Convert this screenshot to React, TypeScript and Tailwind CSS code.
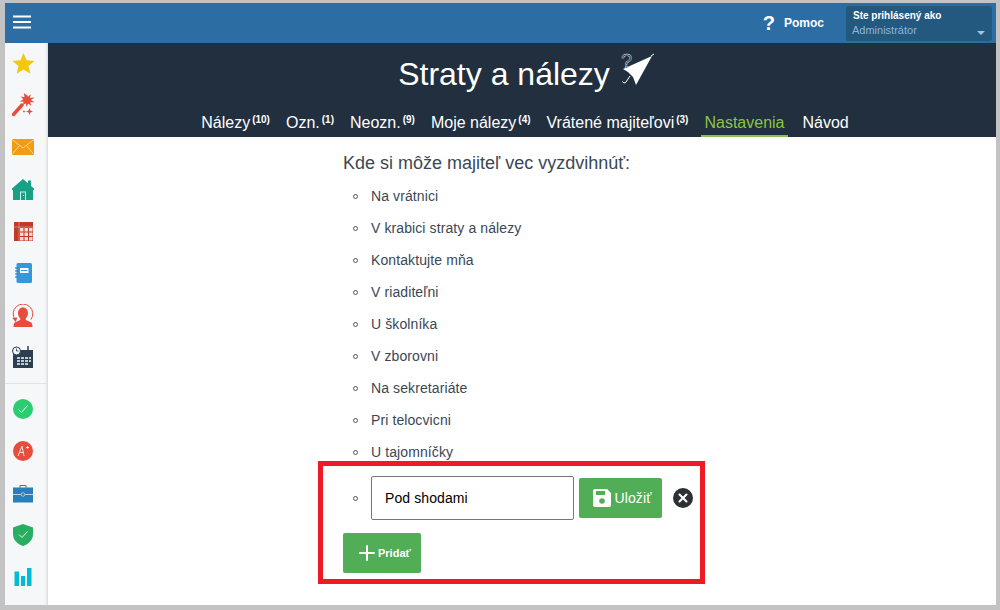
import React from 'react';
import { Plus, X } from 'lucide-react';

const places = [
  'Na vrátnici',
  'V krabici straty a nálezy',
  'Kontaktujte mňa',
  'V riaditeľni',
  'U školníka',
  'V zborovni',
  'Na sekretariáte',
  'Pri telocvicni',
  'U tajomníčky',
];

const tabs = [
  { label: 'Nálezy', count: '(10)' },
  { label: 'Ozn.', count: '(1)' },
  { label: 'Neozn.', count: '(9)' },
  { label: 'Moje nálezy', count: '(4)' },
  { label: 'Vrátené majiteľovi', count: '(3)' },
  { label: 'Nastavenia', active: true },
  { label: 'Návod', last: true },
];

const Bullet = () => (
  <span className="mr-[13px] ml-[10px] h-[5px] w-[5px] shrink-0 rounded-full border border-[#555]" />
);

const SideIcon = ({ children, className = 'h-[42px]' }: { children: React.ReactNode; className?: string }) => (
  <div className={`flex w-full items-center justify-center pr-[7px] ${className}`}>{children}</div>
);

const Sidebar = () => (
  <aside className="flex w-[43px] shrink-0 flex-col items-center bg-[#f5f7f9] shadow-[inset_-3px_0_3px_-2px_rgba(0,0,0,0.15)]">
    <SideIcon className="h-[41px]">
      <svg width="23" height="23" viewBox="0 0 24 24"><path fill="#f4c80f" d="M12 1l3.200 7.600 8.300.7-6.300 5.300 2 8.200L12 18.300 4.800 22.800l2-8.200L.5 9.300l8.300-.7z" /></svg>
    </SideIcon>
    <SideIcon>
      <svg width="24" height="24" viewBox="0 0 24 24">
        <path stroke="#e74c3c" strokeWidth="3.400" strokeLinecap="round" d="M2.500 21.500L11 12" />
        <path fill="#e74c3c" d="M15.500 0l1.300 3.800 3-2.500-1 3.700 4.700-.5-3.500 2.500 3.500 2.300-4.300-.1 1.200 3.800-3.300-2.500-1.300 3.700-1.100-3.900-3.400 2.200 1.500-3.700-4.100-.4 3.700-2.100-2.900-2.800 4 .7-.7-4.100 3.200 2.400z" />
        <path fill="#e74c3c" d="M18.500 15l.9 2.600 2.600.9-2.600.9-.9 2.600-.9-2.600-2.600-.9 2.600-.9zM13 17l.4 1.100 1.100.4-1.100.4-.4 1.100-.4-1.100-1.100-.4 1.100-.4z" />
      </svg>
    </SideIcon>
    <SideIcon>
      <svg width="22" height="16" viewBox="0 0 22 16">
        <rect width="22" height="16" fill="#f39c12" />
        <path fill="none" stroke="#fbe3b5" strokeWidth="0.800" d="M0 0.500l11 8.500L22 0.500M0 15.500l7.500-9M22 15.500l-7.500-9" />
      </svg>
    </SideIcon>
    <SideIcon>
      <svg width="22" height="21" viewBox="0 0 22 21">
        <path fill="#16a085" d="M11 0l5 4.300V1.500h3v5.400l3 2.600v1.500h-1V21H1V11H0V9.500z" />
        <path fill="#d6efe9" d="M8 12.500h6V21h-1V13.500H9V21H8z" />
        <rect x="11" y="16" width="1" height="1" fill="#d6efe9" />
      </svg>
    </SideIcon>
    <SideIcon>
      <svg width="19" height="19" viewBox="0 0 19 19">
        <rect width="19" height="19" fill="#c0392b" />
        <path fill="#f5dcd9" d="M6 6h3.500v3.500H6zM10.500 6H14v3.500h-3.500zM15 6h3.500v3.500H15zM6 10.500h3.500V14H6zM10.500 10.500H14V14h-3.500zM15 10.500h3.500V14H15zM6 15h3.500v3.500H6zM10.500 15H14v3.500h-3.500zM15 15h3.500v3.500H15z" />
        <path stroke="#e9a79f" strokeWidth="0.600" d="M0 5h19M5 0v19" />
      </svg>
    </SideIcon>
    <SideIcon>
      <svg width="17" height="20" viewBox="0 0 17 20">
        <rect x="1.500" width="15.500" height="20" rx="1.500" fill="#3498db" />
        <rect x="5" y="5" width="8.500" height="5" fill="#fff" />
        <rect x="6" y="7" width="6.500" height="1" fill="#3498db" />
        <path stroke="#2c6da4" strokeWidth="1" d="M0 5h3M0 8h3M0 11h3M0 14h3" />
      </svg>
    </SideIcon>
    <SideIcon>
      <svg width="22" height="23" viewBox="0 0 22 23">
        <path fill="none" stroke="#e74c3c" strokeWidth="1" d="M3 15.500A9.800 9.800 0 1 1 19 15.500" />
        <path fill="#e74c3c" d="M0.500 14l5-.5-2 4.500z" />
        <path fill="#e74c3c" d="M11 3.500c3.200 0 5 2.500 5 5.500 0 2.200-.8 4.200-2.200 5.300v1.700l5 2.300c1 .5 1.700 2 1.700 4.700h-19c0-2.700.7-4.200 1.700-4.700l5-2.300v-1.700C6.800 13.200 6 11.200 6 9c0-3 1.800-5.500 5-5.500z" />
      </svg>
    </SideIcon>
    <SideIcon>
      <svg width="22" height="22" viewBox="0 0 22 22">
        <rect x="1" y="4" width="20" height="18" fill="#2c3e50" />
        <path stroke="#2c3e50" strokeWidth="1.500" d="M16 0v4" />
        <path fill="#c3cad1" d="M5 11h3v2H5zM9 11h3v2H9zM13 11h3v2h-3zM17 11h2v2h-2zM5 14h3v2H5zM9 14h3v2H9zM13 14h3v2h-3zM17 14h2v2h-2zM5 17h3v2H5zM9 17h3v2H9zM13 17h3v2h-3z" />
        <circle cx="4.500" cy="5" r="4" fill="#f5f7f9" stroke="#2c3e50" strokeWidth="1" />
        <path fill="none" stroke="#2c3e50" strokeWidth="0.800" d="M4.500 2.500V5h2" />
      </svg>
    </SideIcon>
    <div className="mt-[5px] mb-[4px] h-px w-full bg-[#dfe2e6]" />
    <SideIcon>
      <svg width="20" height="20" viewBox="0 0 20 20">
        <circle cx="10" cy="10" r="10" fill="#2ecc71" />
        <path fill="none" stroke="#e8faf0" strokeWidth="1" d="M5.500 10.500l3 3 6-7" />
      </svg>
    </SideIcon>
    <SideIcon>
      <svg width="20" height="20" viewBox="0 0 20 20">
        <circle cx="10" cy="10" r="10" fill="#e74c3c" />
        <path fill="none" stroke="#fbe3e0" strokeWidth="1" d="M5 15l4-10 2 10M6.500 11.500h4M13 6.500h3M14.500 5v3" />
      </svg>
    </SideIcon>
    <SideIcon>
      <svg width="20" height="19" viewBox="0 0 20 19">
        <path fill="none" stroke="#2980b9" strokeWidth="1" d="M7 4V1.500h6V4" />
        <rect y="3.500" width="20" height="15" fill="#2980b9" />
        <rect y="10" width="20" height="1" fill="#b5d5ea" />
        <circle cx="10" cy="10.500" r="1.800" fill="#2980b9" stroke="#b5d5ea" strokeWidth="0.800" />
      </svg>
    </SideIcon>
    <SideIcon>
      <svg width="20" height="22" viewBox="0 0 20 22">
        <path fill="#27ae60" d="M10 0l10 3.500V10c0 6-4.500 10-10 12C4.500 20 0 16 0 10V3.500z" />
        <path fill="none" stroke="#e6f7ed" strokeWidth="1" d="M6 10.500l3 3 5.500-6" />
      </svg>
    </SideIcon>
    <SideIcon>
      <svg width="18" height="18" viewBox="0 0 18 18">
        <path fill="#00bcd4" d="M0.500 3.500h4.500V18H0.500zM7 8h4v10H7zM13 0h4.500v18H13z" />
      </svg>
    </SideIcon>
  </aside>
);

export default function App() {
  return (
    <div className="relative flex h-[610px] w-[1000px] flex-col overflow-hidden bg-[#c3c3c3] pt-[3px] pr-[4px] pb-[5px] pl-[5px] font-['Liberation_Sans',Arial,sans-serif]">
      <header className="flex h-[40px] shrink-0 items-center bg-[#2c6da4] pl-[8px] text-white">
        <svg width="18" height="14" viewBox="0 0 18 14" className="mt-[-2px]">
          <path fill="#fff" d="M0 0.500h18v2H0zM0 6h18v2H0zM0 11.500h18v2H0z" />
        </svg>
        <div className="ml-auto flex items-center">
          <span className="mr-[8px] text-[20px] leading-none font-bold">?</span>
          <span className="mr-[22px] ml-[1px] text-[12px] font-bold">Pomoc</span>
          <div className="relative mr-[4px] flex h-[35px] w-[146px] flex-col justify-center rounded-[2px] bg-[#23597f] pl-[7px]">
            <span className="text-[10px] leading-[14px] font-bold text-white">Ste prihlásený ako</span>
            <span className="ml-[-1px] text-[11px] leading-[14px] text-[#8fb4d6]">Administrátor</span>
            <span className="absolute top-[25px] right-[7px] h-0 w-0 border-x-[4px] border-t-[4px] border-x-transparent border-t-[#a9c3d8]" />
          </div>
        </div>
      </header>

      <div className="flex min-h-0 flex-1">
        <Sidebar />
        <main className="flex min-w-0 flex-1 flex-col bg-white">
          <section className="flex h-[94px] shrink-0 flex-col items-center bg-[#212f3f] text-white">
            <div className="mt-[8px] ml-[10px] flex items-center">
              <h1 className="text-[32px] leading-[46px] font-normal">Straty a nálezy</h1>
              <svg className="mt-[-9px] ml-[8px]" width="38" height="38" viewBox="0 0 38 38">
                <path fill="#fff" d="M34 5L18 34 15 26 10 21 5 18z" />
                <path fill="none" stroke="#fff" strokeWidth="1" d="M12 25l-4 6c-1 1.500-3 1-3.500-.5" />
                <path stroke="#fff" strokeWidth="1" d="M33 5l3-2" />
                <text x="3" y="17" fontSize="20" fill="#212f3f" stroke="#fff" strokeWidth="0.400" fontFamily="Liberation Sans">?</text>
              </svg>
            </div>
            <nav className="mt-[11px] ml-[6px] flex items-start gap-[10px] text-[16px] leading-[29px]">
              {tabs.map((t) => (
                <a key={t.label} className={`flex h-[29px] items-start border-b-2 px-[3px] ${t.last ? 'ml-[2px]' : ''} ${t.active ? 'border-[#8bc34a] text-[#8bc34a]' : 'border-transparent text-white'}`}>
                  {t.label}
                  {t.count && <sup className="top-[7px] ml-[2px] text-[10px] leading-none font-bold">{t.count}</sup>}
                </a>
              ))}
            </nav>
          </section>

          <section className="ml-[295px] flex flex-col text-[#3b4756]">
            <h2 className="mt-[14px] text-[18px] leading-[24px] font-normal">Kde si môže majiteľ vec vyzdvihnúť:</h2>
            <ul className="mt-[5px] flex flex-col">
              {places.map((p) => (
                <li key={p} className="flex h-[32px] items-center text-[14px] tracking-[0.1px]">
                  <Bullet />
                  {p}
                </li>
              ))}
              <li className="mt-[8px] flex items-center">
                <Bullet />
                <input
                  readOnly
                  value="Pod shodami"
                  className="h-[44px] w-[203px] rounded-[2px] border border-[#767676] bg-white px-[13px] text-[14px] tracking-[0.1px] text-black outline-none"
                />
                <button className="ml-[5px] flex h-[40px] w-[83px] items-center justify-center gap-[4px] rounded-[2px] bg-[#52ad57] pl-[3px] text-[14px] tracking-[0.1px] text-white">
                  <svg width="18" height="18" viewBox="0 0 18 18">
                    <path fill="#fff" d="M2 0h12l4 4v12a2 2 0 0 1-2 2H2a2 2 0 0 1-2-2V2a2 2 0 0 1 2-2z" />
                    <path fill="#52ad57" d="M3 2h9v4H3z" />
                    <circle cx="9" cy="12" r="2.800" fill="#52ad57" />
                  </svg>
                  Uložiť
                </button>
                <span className="ml-[11px] flex h-[20px] w-[20px] items-center justify-center rounded-full bg-[#2d3136] text-white">
                  <X size={14} strokeWidth={3.5} />
                </span>
              </li>
            </ul>
            <button className="mt-[13px] flex h-[40px] w-[78px] items-center rounded-[2px] bg-[#52ad57] pl-[12px] text-[11px] font-bold text-white">
              <Plus size={24} strokeWidth={2} />
              <span className="ml-[-1px]">Pridať</span>
            </button>
          </section>
        </main>
      </div>

      {/* annotation frame */}
      <div className="pointer-events-none absolute top-[461px] left-[318px] h-[123px] w-[387px] border-[5px] border-[#ed1c24]" />
    </div>
  );
}
